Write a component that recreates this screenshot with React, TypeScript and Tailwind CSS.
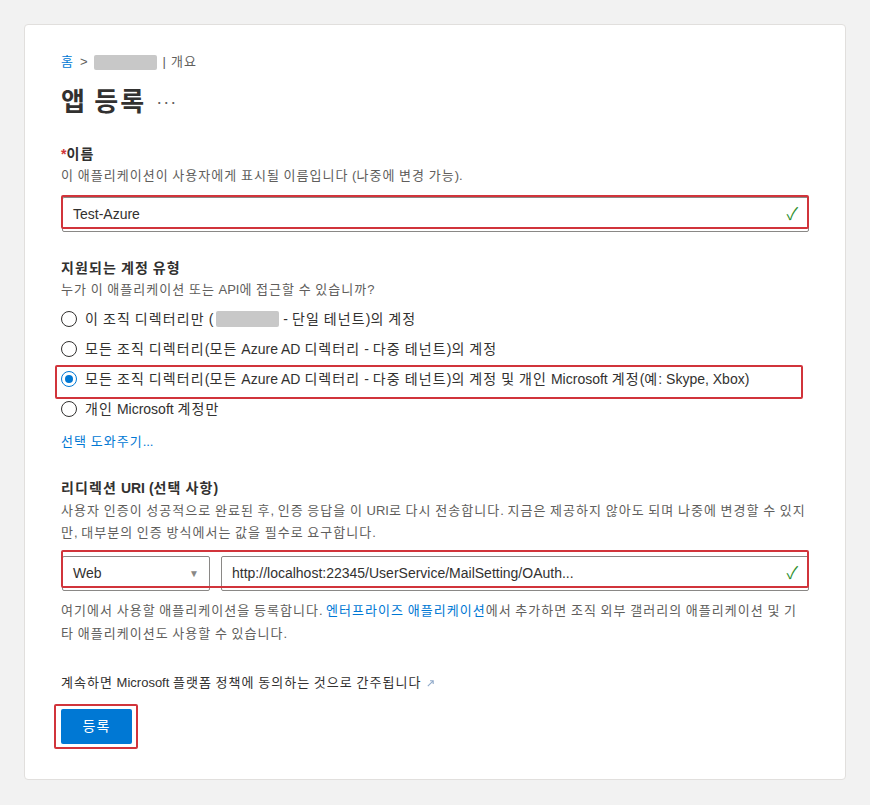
import { useState, type ReactNode } from "react";

const FONT = { fontFamily: '"Liberation Sans", "Noto Sans CJK KR", sans-serif' };

function ko(text: string): ReactNode[] {
  return text.split(/([\uac00-\ud7a3]+)/).map((part, i) =>
    /[\uac00-\ud7a3]/.test(part) ? (
      <span key={i} className="tracking-[0.08em]">
        {part}
      </span>
    ) : (
      part
    )
  );
}

const accountTypes = [
  { id: "single", label: null },
  { id: "multi", label: "모든 조직 디렉터리(모든 Azure AD 디렉터리 - 다중 테넌트)의 계정" },
  {
    id: "multiPersonal",
    label: "모든 조직 디렉터리(모든 Azure AD 디렉터리 - 다중 테넌트)의 계정 및 개인 Microsoft 계정(예: Skype, Xbox)",
  },
  { id: "personal", label: "개인 Microsoft 계정만" },
];

function Redacted({ className = "" }: { className?: string }) {
  return <span className={`inline-block h-[15px] w-[63px] rounded-[2px] bg-[#c8c8c8] align-middle ${className}`} />;
}

function Highlight({ className }: { className: string }) {
  return <div className={`pointer-events-none absolute rounded-[2px] border-2 border-[#d1343b] ${className}`} />;
}

function Check() {
  return <span className="text-[17px] leading-none text-[#2f8f2f]">✓</span>;
}

function Radio({ checked }: { checked: boolean }) {
  return (
    <span
      className={`flex h-4 w-4 shrink-0 items-center justify-center rounded-full border ${
        checked ? "border-[#0078d4]" : "border-[#323130]"
      }`}
    >
      {checked && <span className="h-[8px] w-[8px] rounded-full bg-[#0078d4]" />}
    </span>
  );
}

export default function App() {
  const [account, setAccount] = useState("multiPersonal");

  return (
    <div className="min-h-[805px] bg-[#f2f2f2] px-6 pt-6" style={FONT}>
      <div className="w-[822px] rounded-[4px] border border-[#e1dfdd] bg-white px-[36px] pb-[35px] pt-[27px] text-[#323130]">
        {/* breadcrumb */}
        <div className="flex h-5 items-center text-[13px] text-[#605e5c]">
          <span className="text-[#0078d4]">{ko("홈")}</span>
          <span className="ml-[6px]">&gt;</span>
          <Redacted className="ml-[6px]" />
          <span className="ml-[6px]">|</span>
          <span className="ml-[5px]">{ko("개요")}</span>
        </div>

        <div className="mt-3 flex h-9 items-center">
          <h1 className="text-[26px] font-bold">{ko("앱 등록")}</h1>
          <span className="ml-[10px] text-[18px] tracking-[1px] text-[#605e5c]">···</span>
        </div>

        {/* name */}
        <div className="mt-6 h-5 text-[14px] font-bold leading-5">
          <span className="text-[#d13438]">*</span>
          {ko("이름")}
        </div>
        <p className="mt-px text-[13px] leading-[22px] text-[#605e5c]">
          {ko("이 애플리케이션이 사용자에게 표시될 이름입니다 (나중에 변경 가능).")}
        </p>
        <div className="relative mt-[10px] pl-px">
          <div className="flex h-[35px] items-center rounded-[2px] border border-[#8a8886] pl-[10px] pr-[10px] text-[14px]">
            <span className="flex-1">Test-Azure</span>
            <Check />
          </div>
          <Highlight className="-top-[2px] left-0 right-0 h-[34px]" />
        </div>

        {/* account types */}
        <div className="mt-[26px] h-5 text-[14px] font-bold leading-5">{ko("지원되는 계정 유형")}</div>
        <p className="mt-px text-[13px] leading-[22px] text-[#605e5c]">
          {ko("누가 이 애플리케이션 또는 API에 접근할 수 있습니까?")}
        </p>
        <div className="mt-[3px] flex flex-col">
          {accountTypes.map((t) => (
            <div key={t.id} className="relative">
              <label
                className="flex h-[30px] cursor-pointer items-center gap-2 text-[14px]"
                onClick={() => setAccount(t.id)}
              >
                <Radio checked={account === t.id} />
                {t.label ? (
                  <span>{ko(t.label)}</span>
                ) : (
                  <span>
                    {ko("이 조직 디렉터리만 (")}
                    <Redacted className="-mt-[2px] ml-[3px] mr-[4px] w-[63px] !h-[16px]" />
                    {ko("- 단일 테넌트)의 계정")}
                  </span>
                )}
              </label>
              {t.id === "multiPersonal" && <Highlight className="-left-[6px] top-px h-[34px] w-[748px]" />}
            </div>
          ))}
        </div>
        <a className="mt-2 block h-5 text-[13px] leading-5 text-[#0078d4]">{ko("선택 도와주기...")}</a>

        {/* redirect uri */}
        <div className="mt-[26px] h-5 text-[14px] font-bold leading-5">{ko("리디렉션 URI (선택 사항)")}</div>
        <p className="mt-[2px] text-[13px] leading-[22px] text-[#605e5c]">
          {ko(
            "사용자 인증이 성공적으로 완료된 후, 인증 응답을 이 URI로 다시 전송합니다. 지금은 제공하지 않아도 되며 나중에 변경할 수 있지"
          )}
          {ko("만, 대부분의 인증 방식에서는 값을 필수로 요구합니다.")}
        </p>
        <div className="relative mt-[12px] flex gap-[11px] pl-px">
          <div className="flex h-[35px] w-[148px] items-center rounded-[2px] border border-[#8a8886] pl-[10px] pr-[10px] text-[14px]">
            <span className="flex-1">Web</span>
            <span className="text-[10px] text-[#8a8886]">▼</span>
          </div>
          <div className="flex h-[35px] flex-1 items-center rounded-[2px] border border-[#8a8886] pl-[10px] pr-[10px] text-[14px]">
            <span className="flex-1">http://localhost:22345/UserService/MailSetting/OAuth...</span>
            <Check />
          </div>
          <Highlight className="-top-[6px] left-0 right-0 h-[38px]" />
        </div>

        <p className="mt-2 text-[13px] leading-[23px] text-[#605e5c]">
          {ko("여기에서 사용할 애플리케이션을 등록합니다. ")}
          <span className="text-[#0078d4]">{ko("엔터프라이즈 애플리케이션")}</span>
          {ko("에서 추가하면 조직 외부 갤러리의 애플리케이션 및 기")}
          {ko("타 애플리케이션도 사용할 수 있습니다.")}
        </p>

        <div className="mt-[28px] flex h-5 items-center text-[13px] text-[#323130]">
          <span>{ko("계속하면 Microsoft 플랫폼 정책에 동의하는 것으로 간주됩니다")}</span>
          <svg viewBox="0 0 10 10" className="ml-[5px] h-[9px] w-[9px]" fill="none" stroke="#8fa9c9" strokeWidth="1.2">
            <path d="M2 8 L8 2 M4.5 2 H8 V5.5" />
          </svg>
        </div>

        <div className="relative mt-4 inline-block">
          <button className="h-[35px] w-[71px] rounded-[2px] bg-[#0078d4] text-[14px] text-white">{ko("등록")}</button>
          <Highlight className="-left-[7px] -top-[5px] h-[45px] w-[84px]" />
        </div>
      </div>
    </div>
  );
}
